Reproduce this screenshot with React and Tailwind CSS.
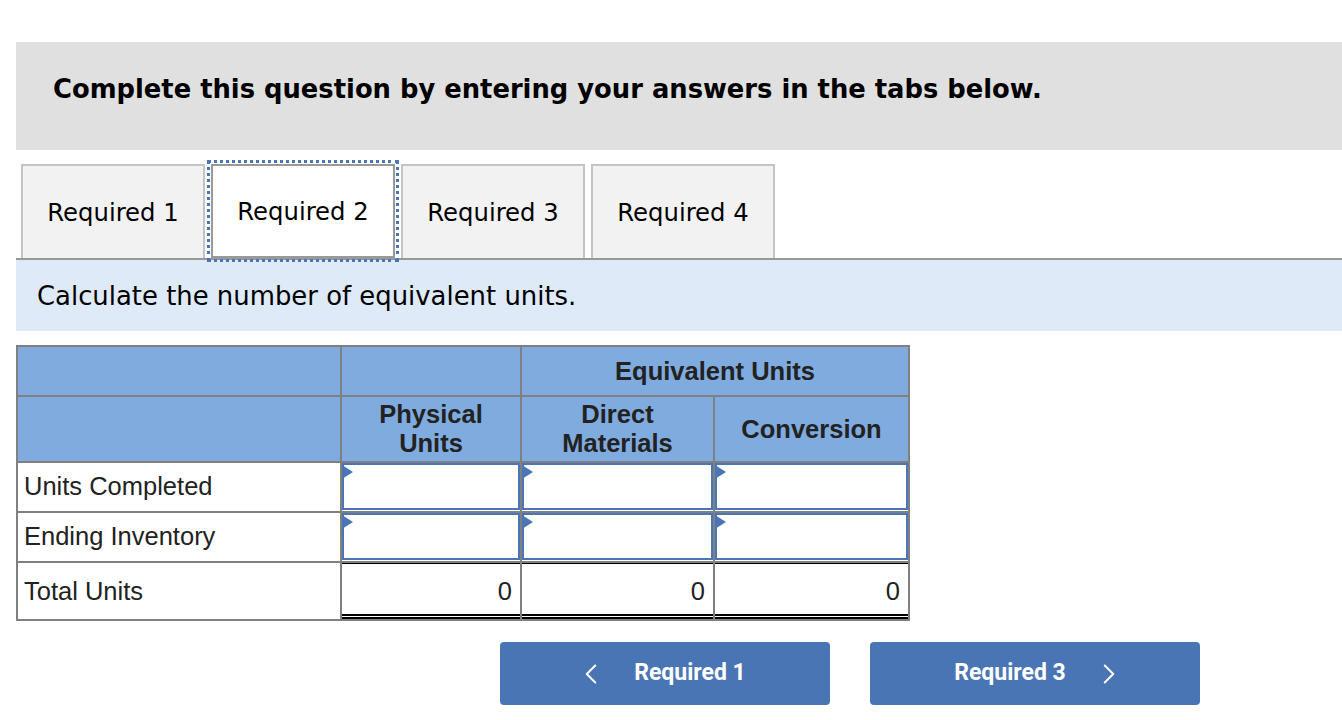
import { ChevronLeft, ChevronRight } from 'lucide-react';

const verdana = { fontFamily: '"DejaVu Sans", Verdana, sans-serif' };

const tabs = ['Required 1', 'Required 2', 'Required 3', 'Required 4'];

const InputCell = () => (
  <td className="p-0 border-2 border-[#808080] h-[50px] align-top">
    <div className="relative h-[47px] border-2 border-[#4a76b8] bg-white">
      <span className="absolute -left-[2px] top-[0px] w-0 h-0 border-y-[7px] border-y-transparent border-l-[11px] border-l-[#4a76b8]" />
    </div>
  </td>
);

const TotalCell = () => (
  <td className="p-0 border-x-2 border-b-2 border-[#808080] h-[58px]">
    <div className="h-[56px] border-t border-black border-b-[5px] border-b-black border-double flex items-center justify-end pr-[8px] pt-[4px]">
      0
    </div>
  </td>
);

export default function App() {
  return (
    <div className="bg-white w-[1342px] h-[720px] overflow-hidden pl-[16px] text-black">
      {/* QUESTION HEADER */}
      <div className="mt-[42px] h-[108px] bg-[#e0e0e0] pl-[37px] pt-[28px]">
        <p className="text-[25.8px] font-bold" style={verdana}>
          Complete this question by entering your answers in the tabs below.
        </p>
      </div>

      {/* TABS */}
      <div className="mt-[14px] flex gap-[6px] pl-[5px] border-b-2 border-[#999999]" style={verdana}>
        {tabs.map((t, i) =>
          i === 1 ? (
            <div
              key={t}
              className="w-[184px] h-[94px] -mb-[2px] bg-white border-2 border-[#999999] outline-[3px] outline-dotted outline-offset-[1px] outline-[#4a76b8] flex items-center justify-center text-[24.3px] pt-[2px]"
            >
              {t}
            </div>
          ) : (
            <div
              key={t}
              className="w-[184px] h-[94px] bg-[#f2f2f2] border-2 border-b-0 border-[#c4c4c4] flex items-center justify-center text-[24.3px] pt-[2px]"
            >
              {t}
            </div>
          )
        )}
      </div>

      {/* INSTRUCTION */}
      <div className="h-[71px] bg-[#deeaf7] flex items-center pl-[21px] text-[25.9px] pt-[2px]" style={verdana}>
        Calculate the number of equivalent units.
      </div>

      {/* TABLE */}
      <table
        className="mt-[14px] border-collapse text-[25.5px] text-[#222]"
        style={{ fontFamily: '"Liberation Sans", Arial, sans-serif' }}
      >
        <colgroup>
          <col className="w-[324px]" />
          <col className="w-[180px]" />
          <col className="w-[193px]" />
          <col className="w-[195px]" />
        </colgroup>
        <thead className="font-bold bg-[#80abdf]">
          <tr className="h-[50px]">
            <th className="border-2 border-[#808080]" />
            <th className="border-2 border-[#808080]" />
            <th colSpan={2} className="border-2 border-[#808080] text-center font-bold">
              Equivalent Units
            </th>
          </tr>
          <tr className="h-[66px] leading-[29px]">
            <th className="border-2 border-[#808080]" />
            <th className="border-2 border-[#808080] font-bold">
              Physical
              <br />
              Units
            </th>
            <th className="border-2 border-[#808080] font-bold">
              Direct
              <br />
              Materials
            </th>
            <th className="border-2 border-[#808080] font-bold">Conversion</th>
          </tr>
        </thead>
        <tbody>
          <tr>
            <td className="border-2 border-[#808080] pl-[6px] pb-[2px]">Units Completed</td>
            <InputCell />
            <InputCell />
            <InputCell />
          </tr>
          <tr>
            <td className="border-2 border-[#808080] pl-[6px] pb-[2px]">Ending Inventory</td>
            <InputCell />
            <InputCell />
            <InputCell />
          </tr>
          <tr>
            <td className="border-2 border-[#808080] pl-[6px]">Total Units</td>
            <TotalCell />
            <TotalCell />
            <TotalCell />
          </tr>
        </tbody>
      </table>

      {/* NAV BUTTONS */}
      <div className="mt-[21px] pl-[484px] flex gap-[40px]" style={{ fontFamily: 'Roboto, sans-serif' }}>
        <button className="w-[330px] h-[63px] bg-[#4a75b5] rounded-[4px] text-white font-bold text-[23px] flex items-center justify-center gap-[26px]">
          <ChevronLeft className="w-[34px] h-[34px]" strokeWidth={1.4} />
          <span className="mr-[10px]">Required 1</span>
        </button>
        <button className="w-[330px] h-[63px] bg-[#4a75b5] rounded-[4px] text-white font-bold text-[23px] flex items-center justify-center gap-[26px]">
          <span className="ml-[10px]">Required 3</span>
          <ChevronRight className="w-[34px] h-[34px]" strokeWidth={1.4} />
        </button>
      </div>
    </div>
  );
}
